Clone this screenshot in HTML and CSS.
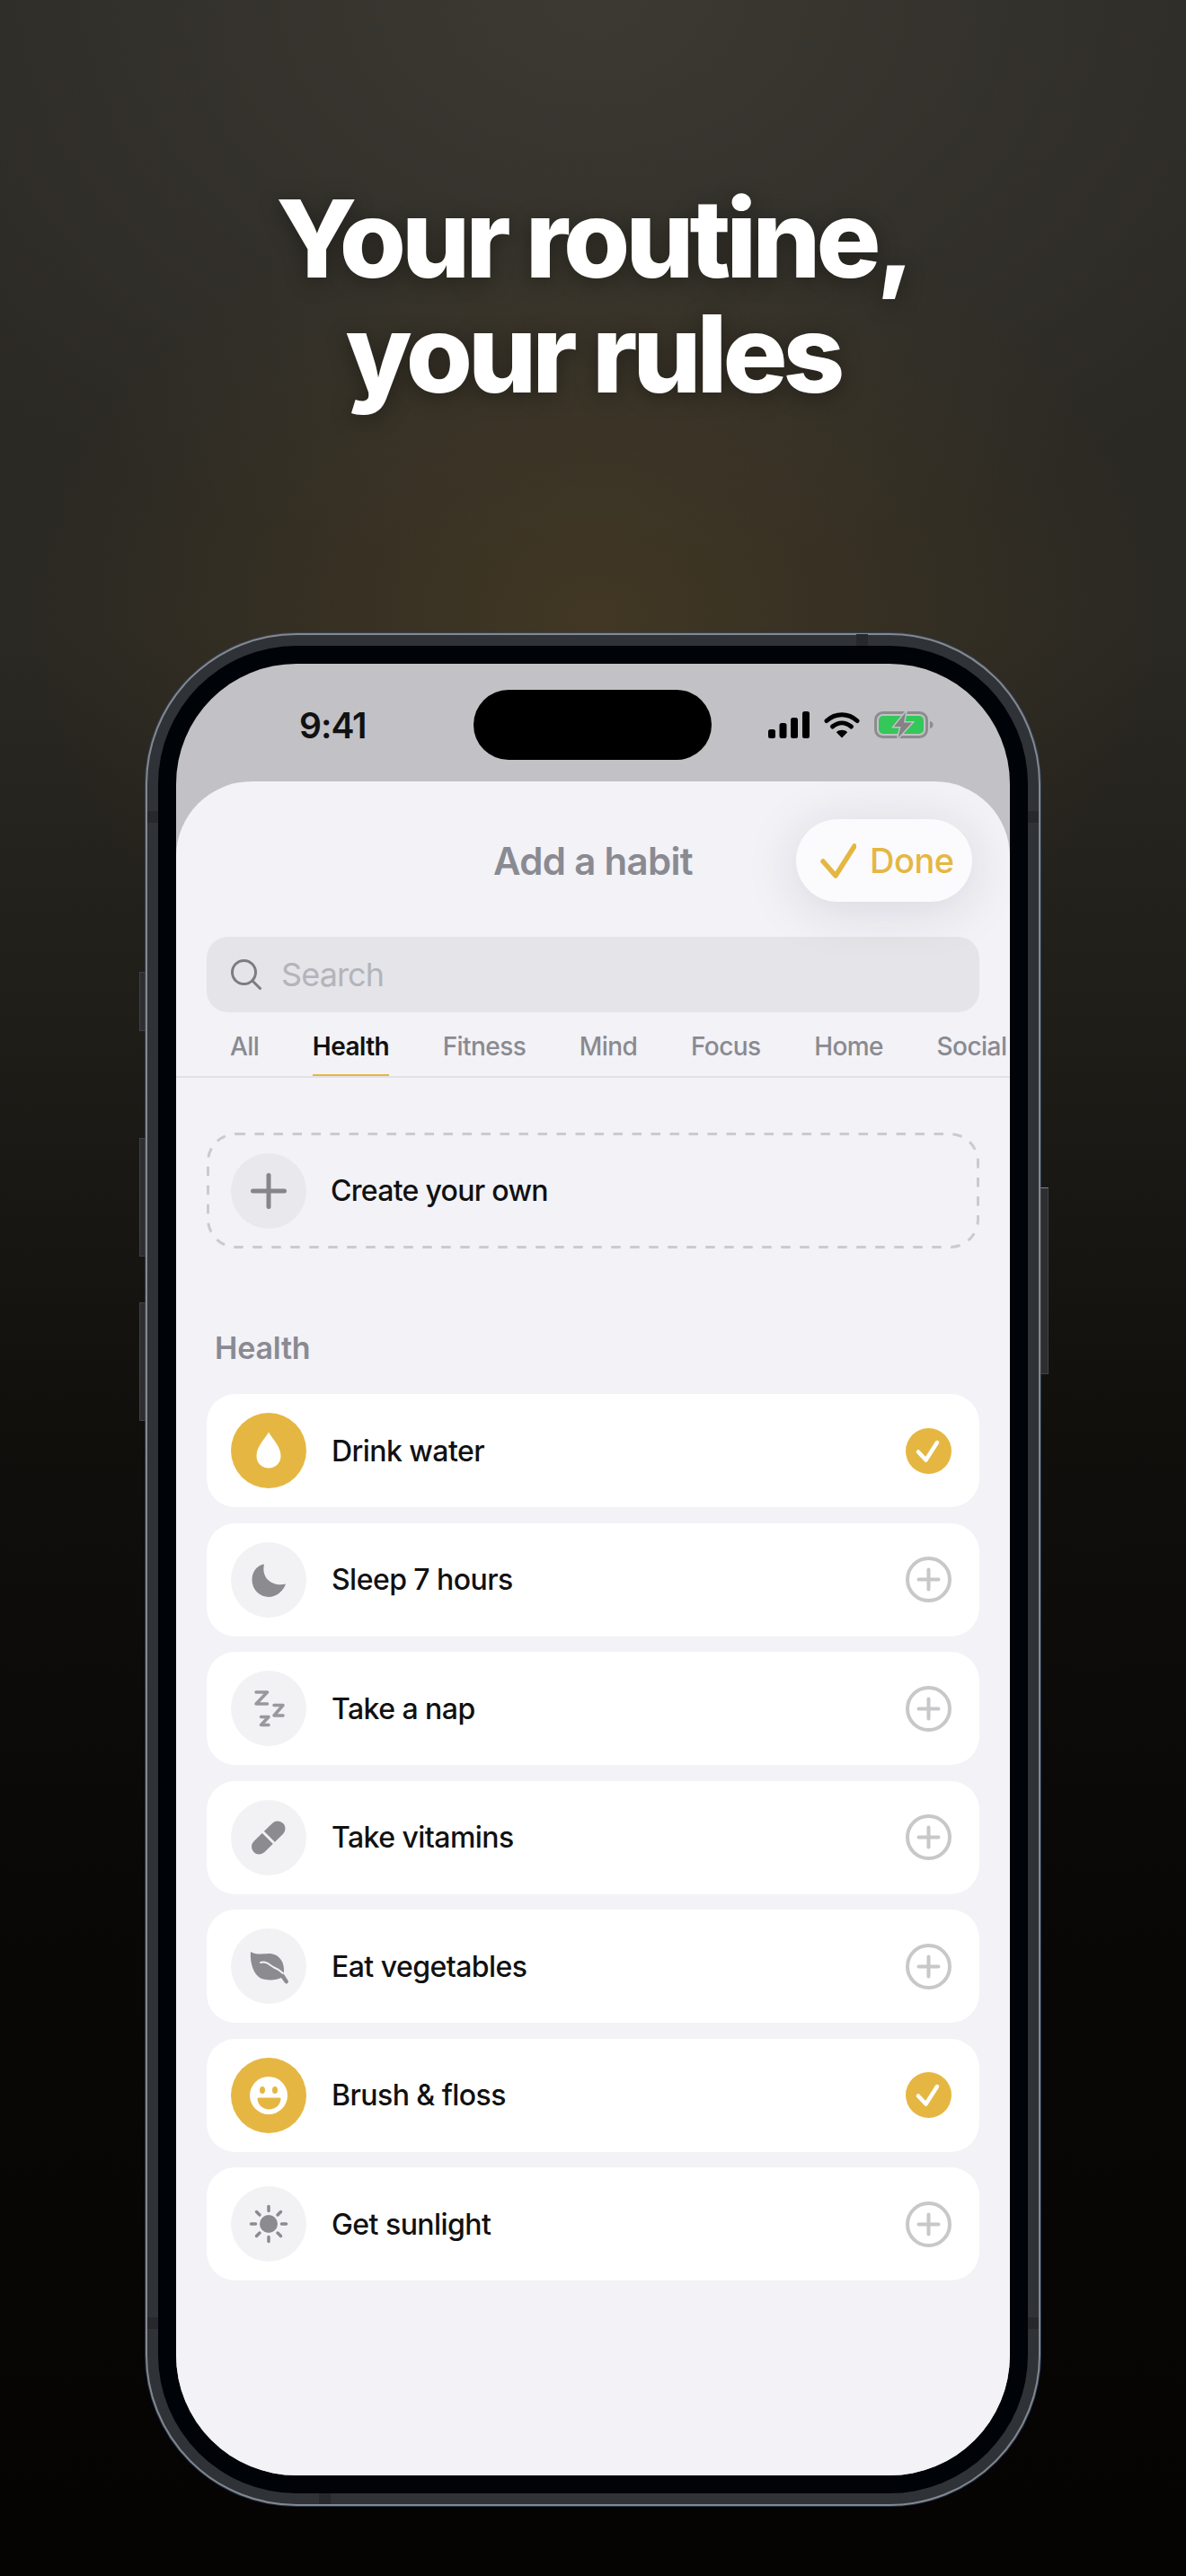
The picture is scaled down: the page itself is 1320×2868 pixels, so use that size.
FILE: index.html
```html
<!DOCTYPE html>
<html lang="en">
<head>
<meta charset="utf-8">
<title>Your routine, your rules</title>
<link rel="stylesheet" href="styles.css">
</head>
<body>
<main class="page">
  <h1 class="headline">Your routine,<br>your rules</h1>
  <div class="phone">
    <span class="btn btn-a"></span><span class="btn btn-b"></span><span class="btn btn-c"></span><span class="btn btn-d"></span>
    <span class="band band-t"></span><span class="band band-l"></span><span class="band band-r"></span><span class="band band-bl"></span><span class="band band-br"></span><span class="band band-b"></span>
    <div class="bezel">
      <div class="screen">
        <div class="status">
          <span class="time">9:41</span>
          <span class="island"></span>
          <div class="status-icons">
            <svg class="i-signal" viewBox="0 0 46 30"><rect x="0" y="20" width="8" height="10" rx="2.5"/><rect x="12.5" y="13" width="8" height="17" rx="2.5"/><rect x="25" y="7" width="8" height="23" rx="2.5"/><rect x="38" y="0" width="8" height="30" rx="2.5"/></svg>
            <svg class="i-wifi" viewBox="0 0 40 30"><path d="M3 10.5C13 1.500 27 1.500 37 10.500" class="wf"/><path d="M9.500 17C16 11.500 24 11.500 30.500 17" class="wf"/><path d="M20 29.500L13.800 23.200C17.500 20 22.500 20 26.200 23.200Z"/></svg>
            <svg class="i-batt" viewBox="0 0 66 30"><rect x="1.500" y="1.500" width="57" height="27" rx="8" fill="none" stroke="#8d8d90" stroke-width="3"/><rect x="5" y="5" width="50" height="20" rx="5" fill="#34c759"/><path d="M62 11c2.500.5 3.500 2 3.500 4s-1 3.500-3.500 4z" fill="#8d8d90"/><path class="bolt" d="M35 1L22 17H29.500L26.500 29.500L42 12.500H33Z"/></svg>
          </div>
        </div>
        <section class="sheet">
          <header class="sheet-head">
            <h2 class="sheet-title">Add a habit</h2>
            <div class="done">
              <svg class="done-check" viewBox="0 0 40 40"><polyline points="3,21 17,37 38,4"/></svg>
              <span>Done</span>
            </div>
          </header>
          <div class="search">
            <svg class="search-icon" viewBox="0 0 34 34"><circle cx="14.500" cy="14.500" r="13"/><line x1="24" y1="24" x2="32.500" y2="32.500"/></svg>
            <span class="search-text">Search</span>
          </div>
          <nav class="tabs">
            <span class="tab">All</span>
            <span class="tab tab-on">Health</span>
            <span class="tab">Fitness</span>
            <span class="tab">Mind</span>
            <span class="tab">Focus</span>
            <span class="tab">Home</span>
            <span class="tab">Social</span>
          </nav>
          <div class="create">
            <svg class="create-dash" viewBox="0 0 860 129"><rect x="1.500" y="1.500" width="857" height="126" rx="31"/></svg>
            <span class="disc disc-create">
              <svg viewBox="0 0 84 84"><path class="s-plus" d="M24.500 42H59.500M42 24.500V59.500"/></svg>
            </span>
            <span class="create-label">Create your own</span>
          </div>
          <h3 class="section">Health</h3>
          <ul class="rows">
            <li class="row">
              <span class="disc disc-on"><svg viewBox="0 0 84 84"><path class="f-white" d="M42 21.500C46 29 55.500 37 55.500 48C55.500 56 49.500 61.500 42 61.500C34.500 61.500 28.500 56 28.500 48C28.500 37 38 29 42 21.500Z"/></svg></span>
              <span class="row-label">Drink water</span>
              <svg class="mark" viewBox="0 0 51 51"><circle class="m-on" cx="25.500" cy="25.500" r="25.500"/><polyline class="m-check" points="14,26.500 22.500,35.500 35,16"/></svg>
            </li>
            <li class="row">
              <span class="disc"><svg viewBox="0 0 84 84"><path class="f-gray" d="M37 24.500C28 26 23.500 34 23.500 42C23.500 52.500 32 61 42 61C51 61 58 54.500 61 46.500C49 50 33 42 37 24.500Z"/></svg></span>
              <span class="row-label">Sleep 7 hours</span>
              <svg class="mark" viewBox="0 0 51 51"><circle class="m-off" cx="25.500" cy="25.500" r="23.500"/><path class="m-plus" d="M14.500 25.500H36.500M25.500 14.500V36.500"/></svg>
            </li>
            <li class="row">
              <span class="disc"><svg viewBox="0 0 84 84"><polyline class="s-zz" points="28,24 40.500,24 28,37 40.500,37"/><polyline class="s-zz" points="48,38.500 58,38.500 48,50 58,50"/><polyline class="s-zz" points="33.500,51.500 42,51.500 33.500,60.500 42,60.500"/></svg></span>
              <span class="row-label">Take a nap</span>
              <svg class="mark" viewBox="0 0 51 51"><circle class="m-off" cx="25.500" cy="25.500" r="23.500"/><path class="m-plus" d="M14.500 25.500H36.500M25.500 14.500V36.500"/></svg>
            </li>
            <li class="row">
              <span class="disc"><svg viewBox="0 0 84 84"><line class="s-pill" x1="31.500" y1="52" x2="52" y2="32"/><line class="s-gap" x1="34" y1="34" x2="50" y2="50"/></svg></span>
              <span class="row-label">Take vitamins</span>
              <svg class="mark" viewBox="0 0 51 51"><circle class="m-off" cx="25.500" cy="25.500" r="23.500"/><path class="m-plus" d="M14.500 25.500H36.500M25.500 14.500V36.500"/></svg>
            </li>
            <li class="row">
              <span class="disc"><svg viewBox="0 0 84 84"><path class="f-gray" d="M22 26C28 30 36 28 44 28C53 29 59 36 59 46L59 51L63.500 58A2 2 0 0 1 60 60.500L56 55C50 58 41 58 34 56C25 52 21 38 22 26Z"/><path class="s-vein" d="M33 38C40 36 43 41 48 43.500C52 45 55 47 58 50"/></svg></span>
              <span class="row-label">Eat vegetables</span>
              <svg class="mark" viewBox="0 0 51 51"><circle class="m-off" cx="25.500" cy="25.500" r="23.500"/><path class="m-plus" d="M14.500 25.500H36.500M25.500 14.500V36.500"/></svg>
            </li>
            <li class="row">
              <span class="disc disc-on"><svg viewBox="0 0 84 84"><circle class="f-white" cx="42" cy="42" r="21"/><ellipse class="f-gold" cx="35" cy="36" rx="3" ry="4"/><ellipse class="f-gold" cx="49" cy="36" rx="3" ry="4"/><path class="f-gold" d="M31 44.500H54C55 44.500 55.500 45 55.500 46C55 52.500 49.500 57.500 42.500 57.500C35.500 57.500 30 52.500 29.500 46C29.500 45 30 44.500 31 44.500Z"/></svg></span>
              <span class="row-label">Brush &amp; floss</span>
              <svg class="mark" viewBox="0 0 51 51"><circle class="m-on" cx="25.500" cy="25.500" r="25.500"/><polyline class="m-check" points="14,26.500 22.500,35.500 35,16"/></svg>
            </li>
            <li class="row">
              <span class="disc"><svg viewBox="0 0 84 84"><circle class="f-gray" cx="42" cy="42" r="10"/><path class="s-sun" d="M42 22.500V27.500M42 56.500V61.500M22.500 42H27.500M56.500 42H61.500M28.500 28.500L32 32M52 52L55.500 55.500M55.500 28.500L52 32M32 52L28.500 55.500"/></svg></span>
              <span class="row-label">Get sunlight</span>
              <svg class="mark" viewBox="0 0 51 51"><circle class="m-off" cx="25.500" cy="25.500" r="23.500"/><path class="m-plus" d="M14.500 25.500H36.500M25.500 14.500V36.500"/></svg>
            </li>
          </ul>
        </section>
      </div>
    </div>
  </div>
</main>
</body>
</html>
```
FILE: styles.css
```css
* { box-sizing: border-box; }
html, body { margin: 0; padding: 0; }
body { font-family: Inter, "Liberation Sans", sans-serif; background: #050403; }
ul { list-style: none; margin: 0; padding: 0; }
svg { display: block; }

.page {
  height: 2868px;
  padding-top: 202px;
  overflow: hidden;
  background:
    radial-gradient(ellipse 620px 480px at 660px 690px, rgba(96, 74, 36, .42), rgba(96, 74, 36, 0)),
    radial-gradient(ellipse 900px 640px at 660px 0, rgba(66, 64, 56, .7), rgba(66, 64, 56, 0)),
    linear-gradient(#2c2a25 0, #2b2923 700px, #1f1d18 1150px, #100f0c 1600px, #090807 2100px, #050403 2868px);
}
.headline {
  margin: 0;
  text-align: center;
  color: #fff;
  font-size: 120px;
  line-height: 128px;
  font-weight: 800;
  letter-spacing: -5px;
  text-shadow: 0 4px 24px rgba(0, 0, 0, .35);
}

.phone {
  position: relative;
  width: 996px;
  height: 2085px;
  margin: 247px 0 0 162px;
  padding: 12px;
  border: 2px solid #85888d;
  border-radius: 168px;
  background: #2f3237;
  box-shadow: 0 0 0 1px rgba(52, 82, 130, .55);
}
.bezel {
  height: 100%;
  padding: 20px;
  border-radius: 154px;
  background: #000308;
}
.screen {
  display: flex;
  flex-direction: column;
  height: 100%;
  border-radius: 134px;
  overflow: hidden;
  background: #c2c1c5;
}
.btn {
  position: absolute;
  background: #2e2e31;
  border: 1px solid #3e4147;
}
.btn-a { left: -9px; top: 375px; width: 7px; height: 66px; }
.btn-b { left: -9px; top: 560px; width: 7px; height: 132px; }
.btn-c { left: -9px; top: 743px; width: 7px; height: 132px; }
.btn-d { right: -11px; top: 615px; width: 9px; height: 208px; border-top-color: #84868a; }
.band { position: absolute; background: #26282c; }
.band-t { left: 789px; top: -1px; width: 13px; height: 13px; }
.band-l { left: 0; top: 196px; width: 12px; height: 13px; }
.band-r { right: 0; top: 196px; width: 12px; height: 13px; }
.band-bl { left: 0; top: 1873px; width: 12px; height: 13px; }
.band-br { right: 0; top: 1873px; width: 12px; height: 13px; }
.band-b { left: 191px; bottom: 0; width: 13px; height: 12px; }

.status {
  display: grid;
  grid-template-columns: 331px 265px 1fr;
  flex: 0 0 131px;
  padding-top: 29px;
}
.time {
  align-self: start;
  margin: 16px 0 0 137px;
  font-size: 39px;
  line-height: 48px;
  font-weight: 600;
  letter-spacing: -1px;
  color: #111;
}
.island {
  display: block;
  height: 78px;
  border-radius: 39px;
  background: #000;
}
.status-icons {
  display: flex;
  align-items: flex-start;
  gap: 16px;
  padding: 24px 0 0 63px;
}
.i-signal { width: 46px; height: 30px; fill: #000; }
.i-wifi { width: 40px; height: 30px; fill: #000; }
.wf { fill: none; stroke: #000; stroke-width: 5; stroke-linecap: round; }
.i-batt { width: 66px; height: 30px; }
.bolt { fill: #838386; stroke: #c2c1c5; stroke-width: 3; paint-order: stroke; }

.sheet {
  flex: 1;
  border-radius: 84px 84px 0 0;
  background: #f2f2f7;
}
.sheet-head {
  display: grid;
  grid-template-columns: minmax(0, 1fr) auto minmax(0, 1fr);
  align-items: center;
  height: 92px;
  margin-top: 42px;
  padding: 0 42px;
}
.sheet-title {
  grid-column: 2;
  margin: 0;
  font-size: 42px;
  font-weight: 600;
  letter-spacing: -.7px;
  color: #8a8a92;
}
.done {
  grid-column: 3;
  justify-self: end;
  display: flex;
  align-items: center;
  gap: 15px;
  width: 196px;
  height: 92px;
  padding-left: 27px;
  border-radius: 46px;
  background: #fbfbfd;
  box-shadow: 0 8px 60px rgba(30, 30, 50, .13);
  font-size: 38px;
  font-weight: 500;
  letter-spacing: -.5px;
  color: #e5b742;
}
.done-check { width: 40px; height: 40px; flex: none; }
.done-check polyline { fill: none; stroke: #e5b742; stroke-width: 5.500; stroke-linecap: round; stroke-linejoin: round; }

.search {
  display: flex;
  align-items: center;
  gap: 22px;
  height: 84px;
  margin: 39px 34px 0;
  padding-left: 27px;
  border-radius: 24px;
  background: #e4e4e9;
}
.search-icon { width: 34px; height: 34px; flex: none; }
.search-icon circle, .search-icon line { fill: none; stroke: #7c7c82; stroke-width: 3; stroke-linecap: round; }
.search-text { font-size: 36px; letter-spacing: -.9px; color: #b4b4ba; }

.tabs {
  display: flex;
  gap: 59.500px;
  height: 73px;
  padding-left: 60px;
  border-bottom: 2px solid #e2e2e6;
  overflow: hidden;
}
.tab {
  flex: none;
  height: 73px;
  padding-top: 21px;
  font-size: 28px;
  line-height: 34px;
  font-weight: 500;
  letter-spacing: -.55px;
  color: #8a8a90;
}
.tab-on {
  border-bottom: 4px solid #e5b742;
  font-weight: 600;
  color: #111;
}

.create {
  position: relative;
  display: flex;
  align-items: center;
  gap: 27px;
  height: 129px;
  margin: 61px 34px 0;
  padding-left: 27px;
}
.create-dash { position: absolute; left: 0; top: 0; width: 860px; height: 129px; }
.create-dash rect { fill: none; stroke: #cbcbcf; stroke-width: 3; stroke-dasharray: 10.5 10.5; }
.create-label { font-size: 32px; font-weight: 500; letter-spacing: -.7px; color: #111; }
.disc {
  flex: none;
  width: 84px;
  height: 84px;
  border-radius: 50%;
  background: #f2f2f4;
}
.disc svg { width: 84px; height: 84px; }
.disc-create { background: #e8e8ed; }
.disc-on { background: #e5b742; }

.section {
  margin: 90px 0 0 43px;
  height: 41px;
  font-size: 34px;
  line-height: 41px;
  font-weight: 600;
  letter-spacing: -.2px;
  color: #8a8a92;
}
.rows {
  display: flex;
  flex-direction: column;
  gap: 17.500px;
  margin: 31px 34px 0;
}
.row {
  display: flex;
  align-items: center;
  gap: 28px;
  height: 126px;
  padding: 0 31px 0 27px;
  border-radius: 32px;
  background: #fff;
}
.row-label { flex: 1; font-size: 32px; font-weight: 500; letter-spacing: -.55px; color: #111; }
.mark { flex: none; width: 51px; height: 51px; }
.m-on { fill: #e5b742; }
.m-off { fill: none; stroke: #c8c8cb; stroke-width: 4; }
.m-plus { fill: none; stroke: #c8c8cb; stroke-width: 4; stroke-linecap: round; }
.m-check { fill: none; stroke: #fff; stroke-width: 4.500; stroke-linecap: round; stroke-linejoin: round; }
.f-white { fill: #fff; }
.f-gray { fill: #8b8b90; }
.f-gold { fill: #e5b742; }
.s-plus { fill: none; stroke: #85858b; stroke-width: 5; stroke-linecap: round; }
.s-zz { fill: none; stroke: #98989d; stroke-width: 3.500; stroke-linecap: round; stroke-linejoin: round; }
.s-pill { stroke: #8b8b90; stroke-width: 17; stroke-linecap: round; }
.s-gap { stroke: #f2f2f4; stroke-width: 3; }
.s-vein { fill: none; stroke: #f2f2f4; stroke-width: 2; stroke-linecap: round; }
.s-sun { fill: none; stroke: #8b8b90; stroke-width: 3.500; stroke-linecap: round; }
```
